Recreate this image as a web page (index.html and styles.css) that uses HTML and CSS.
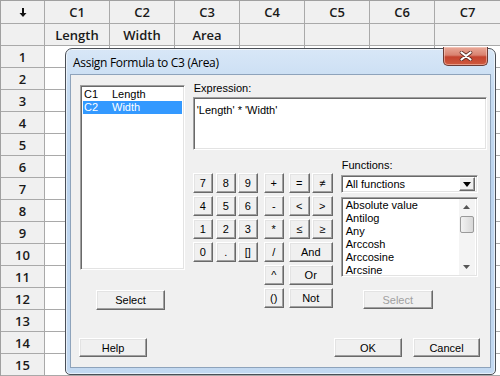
FILE: index.html
```html
<!DOCTYPE html>
<html>
<head>
<meta charset="utf-8">
<link rel="stylesheet" href="styles.css">
</head>
<body>
<div class="sheet">
  <div class="grid">
    <div class="cell hd corner"><svg width="8" height="9" viewBox="0 0 8 9"><path d="M3 0h2v5h2.5L4 9 0.5 5H3z" fill="#111"/></svg></div>
    <div class="cell hd">C1</div><div class="cell hd">C2</div><div class="cell hd">C3</div><div class="cell hd">C4</div><div class="cell hd">C5</div><div class="cell hd">C6</div><div class="cell hd">C7</div>
    <div class="cell hd"></div>
    <div class="cell hd">Length</div><div class="cell hd">Width</div><div class="cell hd">Area</div><div class="cell hd"></div><div class="cell hd"></div><div class="cell hd"></div><div class="cell hd"></div>
    <div class="cell hd rn">1</div><div class="cell"></div><div class="cell"></div><div class="cell"></div><div class="cell"></div><div class="cell"></div><div class="cell"></div><div class="cell"></div>
    <div class="cell hd rn">2</div><div class="cell"></div><div class="cell"></div><div class="cell"></div><div class="cell"></div><div class="cell"></div><div class="cell"></div><div class="cell"></div>
    <div class="cell hd rn">3</div><div class="cell"></div><div class="cell"></div><div class="cell"></div><div class="cell"></div><div class="cell"></div><div class="cell"></div><div class="cell"></div>
    <div class="cell hd rn">4</div><div class="cell"></div><div class="cell"></div><div class="cell"></div><div class="cell"></div><div class="cell"></div><div class="cell"></div><div class="cell"></div>
    <div class="cell hd rn">5</div><div class="cell"></div><div class="cell"></div><div class="cell"></div><div class="cell"></div><div class="cell"></div><div class="cell"></div><div class="cell"></div>
    <div class="cell hd rn">6</div><div class="cell"></div><div class="cell"></div><div class="cell"></div><div class="cell"></div><div class="cell"></div><div class="cell"></div><div class="cell"></div>
    <div class="cell hd rn">7</div><div class="cell"></div><div class="cell"></div><div class="cell"></div><div class="cell"></div><div class="cell"></div><div class="cell"></div><div class="cell"></div>
    <div class="cell hd rn">8</div><div class="cell"></div><div class="cell"></div><div class="cell"></div><div class="cell"></div><div class="cell"></div><div class="cell"></div><div class="cell"></div>
    <div class="cell hd rn">9</div><div class="cell"></div><div class="cell"></div><div class="cell"></div><div class="cell"></div><div class="cell"></div><div class="cell"></div><div class="cell"></div>
    <div class="cell hd rn">10</div><div class="cell"></div><div class="cell"></div><div class="cell"></div><div class="cell"></div><div class="cell"></div><div class="cell"></div><div class="cell"></div>
    <div class="cell hd rn">11</div><div class="cell"></div><div class="cell"></div><div class="cell"></div><div class="cell"></div><div class="cell"></div><div class="cell"></div><div class="cell"></div>
    <div class="cell hd rn">12</div><div class="cell"></div><div class="cell"></div><div class="cell"></div><div class="cell"></div><div class="cell"></div><div class="cell"></div><div class="cell"></div>
    <div class="cell hd rn">13</div><div class="cell"></div><div class="cell"></div><div class="cell"></div><div class="cell"></div><div class="cell"></div><div class="cell"></div><div class="cell"></div>
    <div class="cell hd rn">14</div><div class="cell"></div><div class="cell"></div><div class="cell"></div><div class="cell"></div><div class="cell"></div><div class="cell"></div><div class="cell"></div>
    <div class="cell hd rn">15</div><div class="cell"></div><div class="cell"></div><div class="cell"></div><div class="cell"></div><div class="cell"></div><div class="cell"></div><div class="cell"></div>
  </div>

  <div class="dialog">
    <div class="titlebar">
      <span class="title">Assign Formula to C3 (Area)</span>
      <div class="close"><svg width="14" height="10" viewBox="0 0 14 10"><path d="M2.5 1.5L11.5 8.5M11.5 1.5L2.5 8.5" stroke="#5a2a22" stroke-width="3.6" stroke-linecap="round"/><path d="M2.5 1.5L11.5 8.5M11.5 1.5L2.5 8.5" stroke="#fff" stroke-width="2.2" stroke-linecap="round"/></svg></div>
    </div>
    <div class="client">
      <div class="main">
        <div class="left">
          <div class="varlist sunken">
            <div class="var"><span class="vc">C1</span><span>Length</span></div>
            <div class="var sel"><span class="vc">C2</span><span>Width</span></div>
          </div>
          <div class="btn select-left">Select</div>
        </div>
        <div class="right">
          <div class="label">Expression:</div>
          <div class="expr sunken">'Length' * 'Width'</div>
          <div class="lower">
            <div class="keypad">
              <div class="btn k c1 r1">7</div><div class="btn k c2 r1">8</div><div class="btn k c3 r1">9</div><div class="btn k c4 r1">+</div><div class="btn k c5 r1">=</div><div class="btn k c6 r1">≠</div>
              <div class="btn k c1 r2">4</div><div class="btn k c2 r2">5</div><div class="btn k c3 r2">6</div><div class="btn k c4 r2">-</div><div class="btn k c5 r2">&lt;</div><div class="btn k c6 r2">&gt;</div>
              <div class="btn k c1 r3">1</div><div class="btn k c2 r3">2</div><div class="btn k c3 r3">3</div><div class="btn k c4 r3">*</div><div class="btn k c5 r3">≤</div><div class="btn k c6 r3">≥</div>
              <div class="btn k c1 r4">0</div><div class="btn k c2 r4">.</div><div class="btn k c3 r4">[]</div><div class="btn k c4 r4">/</div><div class="btn k wide r4">And</div>
              <div class="btn k c4 r5">^</div><div class="btn k wide r5">Or</div>
              <div class="btn k c4 r6">()</div><div class="btn k wide r6">Not</div>
            </div>
            <div class="funcs">
              <div class="label">Functions:</div>
              <div class="combo sunken">
                <span class="combo-text">All functions</span>
                <div class="combo-btn"><svg width="8" height="5" viewBox="0 0 8 5"><path d="M0 0h8L4 5z" fill="#000"/></svg></div>
              </div>
              <div class="flist sunken">
                <div class="fitems">
                  <div>Absolute value</div><div>Antilog</div><div>Any</div><div>Arccosh</div><div>Arccosine</div><div>Arcsine</div>
                </div>
                <div class="vscroll">
                  <div class="arrow"><svg width="7" height="4" viewBox="0 0 7 4"><path d="M3.5 0L7 4H0z" fill="#555"/></svg></div>
                  <div class="thumb"></div>
                  <div class="track"></div>
                  <div class="arrow"><svg width="7" height="4" viewBox="0 0 7 4"><path d="M0 0h7L3.5 4z" fill="#555"/></svg></div>
                </div>
              </div>
              <div class="btn disabled select-right">Select</div>
            </div>
          </div>
        </div>
      </div>
      <div class="bottom">
        <div class="btn help">Help</div>
        <div class="btn ok">OK</div>
        <div class="btn cancel">Cancel</div>
      </div>
    </div>
  </div>
</div>
</body>
</html>
```
FILE: styles.css
```css
* { box-sizing: border-box; }
html, body { margin: 0; padding: 0; }
body { width: 500px; height: 376px; overflow: hidden; background: #fff; }

.sheet { position: relative; width: 500px; height: 376px; overflow: hidden; }

.grid {
  display: grid;
  grid-template-columns: 44px repeat(6, 65px) 66px;
  grid-template-rows: 23px repeat(16, 22px);
  border-top: 1px solid #a0a0a0;
  border-left: 1px solid #a0a0a0;
  font-family: "Open Sans", "Liberation Sans", sans-serif;
  font-size: 13px;
  font-weight: 600;
  color: #1a1a1a;
}
.cell {
  border-right: 1px solid #a9a9a9;
  border-bottom: 1px solid #a9a9a9;
  background: #fff;
  display: flex;
  align-items: center;
  justify-content: center;
}
.cell.hd { background: #f0f0f0; }
.corner svg { display: block; }

.dialog {
  position: absolute;
  left: 65px;
  top: 48px;
  width: 431px;
  height: 327px;
  border: 1px solid #4a4f57;
  border-radius: 7px 7px 5px 5px;
  background: linear-gradient(180deg, #d8e7f7 0%, #c7dcf2 12%, #bcd4ee 40%, #c3d9f1 100%);
  box-shadow: inset 0 0 0 1px rgba(255,255,255,0.6);
  display: flex;
  flex-direction: column;
}
.titlebar {
  height: 25px;
  display: flex;
  align-items: center;
  padding-left: 7px;
  position: relative;
}
.title {
  font-family: "Open Sans", "Liberation Sans", sans-serif;
  font-size: 12px;
  letter-spacing: -0.3px;
  color: #000;
  margin-top: 2px;
}
.close {
  position: absolute;
  right: 7px;
  top: -2px;
  width: 45px;
  height: 19px;
  border: 1px solid #6b3b35;
  border-top: none;
  border-radius: 0 0 5px 5px;
  background: linear-gradient(180deg, #e9aa9a 0%, #d98270 45%, #c4432f 55%, #cf5a3e 100%);
  box-shadow: inset 0 0 0 1px rgba(255,220,210,0.5);
  display: flex;
  align-items: center;
  justify-content: center;
}
.close svg { display: block; }

.client {
  margin: 0 4px 6px 4px;
  height: 294px;
  border: 1px solid #8ea3bb;
  background: #f0f0f0;
  padding: 7px 3px 0 9px;
  display: flex;
  flex-direction: column;
  font-family: "Liberation Sans", Arial, sans-serif;
  font-size: 11px;
  color: #000;
}

.sunken {
  background: #fff;
  border: 1px solid;
  border-color: #a0a0a0 #fff #fff #a0a0a0;
  box-shadow: inset 1px 1px #696969, inset -1px -1px #e3e3e3;
}
.btn {
  background: #f0f0f0;
  border: 1px solid;
  border-color: #fff #696969 #696969 #fff;
  box-shadow: inset -1px -1px #a0a0a0, inset 1px 1px #e3e3e3;
  display: flex;
  align-items: center;
  justify-content: center;
  font-size: 11px;
  color: #000;
}
.btn.disabled { color: #a0a0a0; }

.main { display: flex; gap: 8px; }
.left { width: 105px; display: flex; flex-direction: column; }
.varlist { height: 185px; margin-top: 3px; padding: 2px 2px; }
.var { height: 13px; line-height: 13px; display: flex; padding-left: 1px; }
.var .vc { width: 28px; }
.var.sel { background: #3399ff; color: #fff; }
.select-left { width: 69px; height: 20px; margin: 20px 0 0 16px; }

.right { width: 295px; display: flex; flex-direction: column; }
.label { height: 13px; line-height: 13px; padding-left: 1px; }
.expr { height: 53px; margin-top: 2px; padding: 6px 3px; line-height: 13px; }
.lower { display: flex; margin-top: 9px; align-items: flex-start; }

.keypad {
  margin-top: 14px;
  width: 148px;
  display: grid;
  grid-template-columns: 20px 3px 20px 2px 20px 6px 20px 5px 21px 2px 21px;
  grid-template-rows: repeat(6, 20px);
  row-gap: 3px;
}
.k { font-size: 11px; }
.c1 { grid-column: 1; } .c2 { grid-column: 3; } .c3 { grid-column: 5; }
.c4 { grid-column: 7; } .c5 { grid-column: 9; } .c6 { grid-column: 11; }
.wide { grid-column: 9 / 12; }
.r1 { grid-row: 1; } .r2 { grid-row: 2; } .r3 { grid-row: 3; }
.r4 { grid-row: 4; } .r5 { grid-row: 5; } .r6 { grid-row: 6; }

.funcs { width: 137px; display: flex; flex-direction: column; }
.combo { height: 18px; margin-top: 3px; display: flex; align-items: center; padding: 2px; }
.combo-text { flex: 1; padding-left: 2px; font-size: 11px; }
.combo-btn {
  width: 16px; height: 14px;
  background: #f0f0f0;
  border: 1px solid;
  border-color: #fff #696969 #696969 #fff;
  box-shadow: inset -1px -1px #a0a0a0;
  display: flex; align-items: center; justify-content: center;
}
.combo-btn svg { display: block; }
.flist { height: 80px; margin-top: 4px; display: flex; padding: 1px 2px 1px 2px; }
.fitems { flex: 1; padding-left: 2px; line-height: 13px; overflow: hidden; }
.vscroll { width: 16px; display: flex; flex-direction: column; background: #f4f4f4; }
.vscroll .arrow { height: 16px; display: flex; align-items: center; justify-content: center; }
.vscroll .arrow svg { display: block; }
.vscroll .thumb {
  height: 17px;
  margin: 1px 1px 0;
  border: 1px solid #9a9a9a;
  border-radius: 2px;
  background: linear-gradient(90deg, #f2f2f2, #d8d8d8);
}
.vscroll .track { flex: 1; }
.select-right { width: 70px; height: 19px; margin: 13px 0 0 22px; }

.bottom { display: flex; margin-top: 28px; margin-left: -1px; margin-right: 7px; }
.help { width: 68px; height: 19px; }
.ok { width: 68px; height: 19px; margin-left: auto; }
.cancel { width: 67px; height: 19px; margin-left: 11px; }
```
